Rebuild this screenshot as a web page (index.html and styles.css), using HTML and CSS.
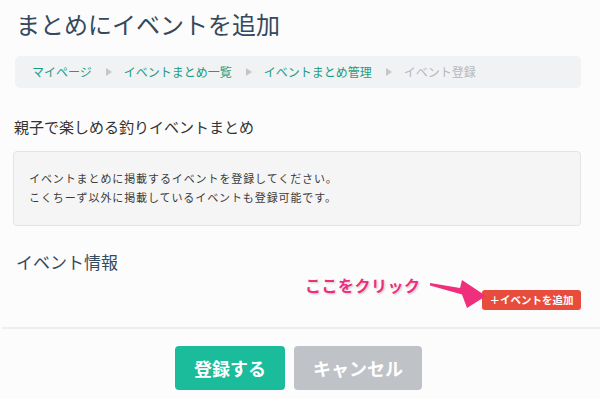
FILE: index.html
```html
<!DOCTYPE html>
<html lang="ja">
<head>
<meta charset="utf-8">
<title>まとめにイベントを追加</title>
<link rel="stylesheet" href="styles.css">
</head>
<body>
<div class="page">
  <h1 class="title">まとめにイベントを追加</h1>
  <nav class="breadcrumb">
    <a class="crumb">マイページ</a><span class="sep"></span>
    <a class="crumb">イベントまとめ一覧</a><span class="sep"></span>
    <a class="crumb">イベントまとめ管理</a><span class="sep"></span>
    <span class="crumb current">イベント登録</span>
  </nav>
  <h2 class="subtitle">親子で楽しめる釣りイベントまとめ</h2>
  <div class="notice">
    <p>イベントまとめに掲載するイベントを登録してください。</p>
    <p>こくちーず以外に掲載しているイベントも登録可能です。</p>
  </div>
  <h3 class="section">イベント情報</h3>
  <div class="add-row">
    <span class="callout">ここをクリック</span>
    <svg class="arrow" width="60" height="34" viewBox="0 0 60 34"><polygon points="1,5 31,10 33,2 57,18 38,30 33,16.5 1,7.5" fill="#ef2f7b"/></svg>
    <button class="add-btn">＋イベントを追加</button>
  </div>
</div>
<hr class="divider">
<div class="actions">
  <button class="btn primary">登録する</button>
  <button class="btn muted">キャンセル</button>
</div>
</body>
</html>
```
FILE: styles.css
```css
html, body {
  margin: 0;
  padding: 0;
  background: #fcfcfc;
  font-family: "Noto Sans CJK JP", "Noto Sans", sans-serif;
}
.page {
  padding: 0 19px 0 13px;
}
.title {
  margin: 11px 0 0 3px;
  font-size: 24px;
  line-height: 26px;
  font-weight: 400;
  color: #34495e;
}
.breadcrumb {
  margin: 19px 0 0 2px;
  height: 32px;
  background: #f1f2f4;
  border-radius: 5px;
  display: flex;
  align-items: center;
  padding-left: 17px;
  font-size: 12px;
}
.crumb {
  color: #1a9d80;
  line-height: 14px;
}
.crumb.current {
  color: #b5b9bd;
}
.sep {
  width: 0;
  height: 0;
  border-left: 6px solid #c4c6c8;
  border-top: 4px solid transparent;
  border-bottom: 4px solid transparent;
  margin: 0 12px 0 14px;
}
.subtitle {
  margin: 29px 0 0 1px;
  font-size: 15px;
  line-height: 20px;
  font-weight: 400;
  color: #333;
}
.notice {
  margin-top: 14px;
  height: 75px;
  box-sizing: border-box;
  background: #f5f5f5;
  border: 1px solid #e4e4e4;
  border-radius: 4px;
  padding: 17px 15px;
}
.notice p {
  margin: 0;
  font-size: 11px;
  line-height: 19px;
  color: #3a3a3a;
  letter-spacing: 0.9px;
}
.section {
  margin: 25px 0 0 3px;
  font-size: 17px;
  line-height: 22px;
  font-weight: 400;
  color: #34495e;
}
.add-row {
  position: relative;
  display: flex;
  justify-content: flex-end;
  margin-top: 17px;
  height: 20px;
}
.callout {
  position: absolute;
  left: 292px;
  top: -17px;
  font-size: 16px;
  font-weight: 700;
  letter-spacing: 0.5px;
  color: #ec2f7b;
  text-shadow: 0 0 2px #fff, 1px 1px 2px rgba(0,0,0,0.25);
}
.arrow {
  position: absolute;
  left: 416px;
  top: -12px;
}
.add-btn {
  height: 20px;
  width: 99px;
  padding: 0;
  border: 0;
  border-radius: 3px;
  background: #e74c3c;
  color: #fff;
  font-family: inherit;
  font-size: 10.5px;
  font-weight: 700;
  line-height: 20px;
}
.divider {
  margin: 17px 0 0 2px;
  border: 0;
  height: 2px;
  background: #efefef;
}
.actions {
  display: flex;
  justify-content: center;
  gap: 9px;
  margin-top: 17px;
  padding-right: 3px;
}
.btn {
  height: 44px;
  padding: 0 19px;
  border: 0;
  border-radius: 4px;
  color: #fff;
  font-family: inherit;
  font-size: 18px;
  font-weight: 700;
}
.btn.primary {
  background: #1abc9c;
}
.btn.muted {
  background: #bfc3c7;
}
```
